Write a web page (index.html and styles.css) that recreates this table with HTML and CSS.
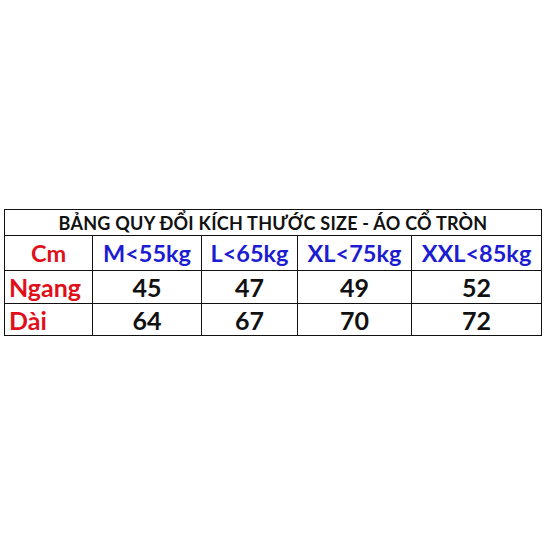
FILE: index.html
```html
<!DOCTYPE html>
<html>
<head>
<meta charset="utf-8">
<link rel="stylesheet" href="styles.css">
</head>
<body>
<div class="page">
  <table class="size-table">
    <colgroup>
      <col class="c1"><col class="c2"><col class="c3"><col class="c4"><col class="c5">
    </colgroup>
    <tr class="r-title"><td colspan="5" class="title">BẢNG QUY ĐỔI KÍCH THƯỚC SIZE - ÁO CỔ TRÒN</td></tr>
    <tr class="r-head">
      <td class="red center">Cm</td>
      <td class="blue">M&lt;55kg</td>
      <td class="blue">L&lt;65kg</td>
      <td class="blue">XL&lt;75kg</td>
      <td class="blue">XXL&lt;85kg</td>
    </tr>
    <tr class="r-a">
      <td class="red label">Ngang</td>
      <td class="num">45</td><td class="num">47</td><td class="num">49</td><td class="num">52</td>
    </tr>
    <tr class="r-b">
      <td class="red label">Dài</td>
      <td class="num">64</td><td class="num">67</td><td class="num">70</td><td class="num">72</td>
    </tr>
  </table>
</div>
</body>
</html>
```
FILE: styles.css
```css
html, body { margin: 0; padding: 0; background: #fff; }
.page { width: 548px; height: 548px; padding: 209px 0 0 4px; box-sizing: border-box; }
.size-table {
  border-collapse: collapse;
  table-layout: fixed;
  width: 537px;
  font-family: Lato, "Open Sans", sans-serif;
  font-weight: 700;
}
.c1 { width: 88px; } .c2 { width: 109px; } .c3 { width: 96px; } .c4 { width: 114px; } .c5 { width: 130px; }
.size-table td {
  border: 1.5px solid #111;
  padding: 0;
  text-align: center;
  white-space: nowrap;
  overflow: hidden;
}
.r-title td { height: 25px; font-size: 18px; letter-spacing: 0.25px; color: #111; }
.r-head td { height: 34px; font-size: 23.5px; }
.r-a td { height: 32px; }
.r-b td { height: 31px; }
.red { color: #e0101a; }
.blue { color: #1c1cd0; }
.label { text-align: left !important; padding-left: 4px !important; font-size: 25px; }
.num { font-size: 25px; color: #111; }
.center { text-align: center; font-size: 24px; }
```
